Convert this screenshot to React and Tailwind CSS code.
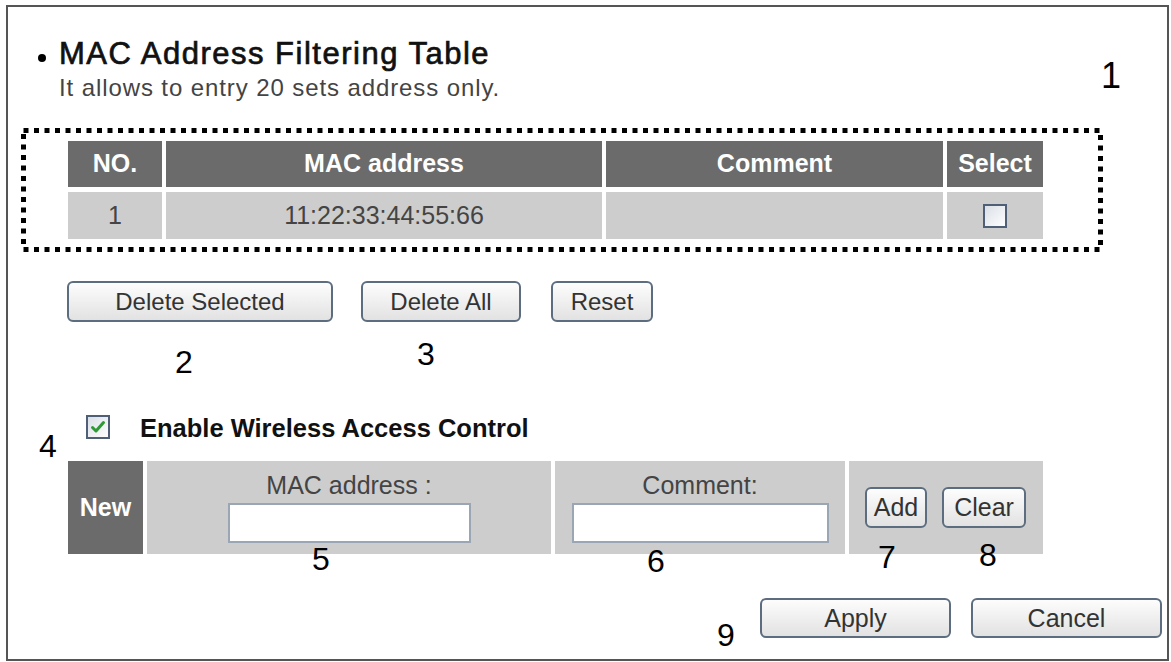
import React from "react";

const F = "font-['Liberation_Sans',Arial,Helvetica,sans-serif]";

function Btn({ children, className = "" }) {
  return (
    <button
      type="button"
      className={`flex items-center justify-center rounded-[6px] border-2 border-[#5d6d80] bg-linear-to-b from-[#fdfdfd] to-[#e2e2e2] text-[#333] leading-none ${className}`}
    >
      {children}
    </button>
  );
}

function Digit({ children, className = "" }) {
  return (
    <div className={`text-[32px] leading-[36px] text-black ${className}`}>{children}</div>
  );
}

function Check({ checked }) {
  return (
    <svg width="24" height="24" viewBox="0 0 24 24">
      <defs>
        <linearGradient id={checked ? "cg1" : "cg2"} x1="0" y1="0" x2="1" y2="1">
          <stop offset="0" stopColor="#d9dee6" />
          <stop offset="1" stopColor="#ffffff" />
        </linearGradient>
      </defs>
      <rect x="1" y="1" width="22" height="22" fill={`url(#${checked ? "cg1" : "cg2"})`} stroke="#4f5f78" strokeWidth="2" />
      {checked && (
        <path d="M6.5 12.5 L10 16 L17.5 7.5" fill="none" stroke="#2f9a35" strokeWidth="3" strokeLinecap="round" strokeLinejoin="round" />
      )}
    </svg>
  );
}

export default function App() {
  return (
    <div className={`${F} w-[1171px] h-[662px] bg-white overflow-hidden`}>
      <div className="relative ml-[6px] mt-[5px] w-[1163px] h-[656px] border-2 border-[#555]">
        {/* Header */}
        <div className="flex mt-[29px]">
          <div className="flex flex-col">
            <div className="flex items-center h-[36px]">
              <div className="ml-[30px] mt-[8px] w-[8px] h-[8px] rounded-full bg-black" />
              <div className="ml-[13px] text-[31px] leading-[36px] tracking-[1.5px] text-[#111] [-webkit-text-stroke:0.7px_#111]">
                MAC Address Filtering Table
              </div>
            </div>
            <div className="ml-[51px] mt-[2px] text-[24px] leading-[28px] tracking-[0.9px] text-[#444]">
              It allows to entry 20 sets address only.
            </div>
          </div>
          <div className="ml-auto mr-[46px] mt-[20px] text-[36px] leading-[40px] text-black">1</div>
        </div>

        {/* Dotted table box */}
        <div className="relative ml-[13px] mt-[26px] w-[1082px] h-[124px] pl-[47px] pt-[13px]">
          <svg className="absolute inset-0" width="1082" height="124" viewBox="0 0 1082 124">
            <rect x="2.5" y="2.5" width="1077" height="119" fill="none" stroke="#000" strokeWidth="5" strokeDasharray="5 5.5" />
          </svg>
          <div className="grid grid-cols-[94px_436px_337px_96px] gap-x-[4px] gap-y-[5px]">
            {["NO.", "MAC address", "Comment", "Select"].map((h) => (
              <div key={h} className="h-[46px] bg-[#6b6b6b] flex items-center justify-center text-white font-bold text-[25px]">
                {h}
              </div>
            ))}
            <div className="h-[47px] bg-[#cdcdcd] flex items-center justify-center text-[25px] text-[#444]">1</div>
            <div className="h-[47px] bg-[#cdcdcd] flex items-center justify-center text-[25px] text-[#444]">11:22:33:44:55:66</div>
            <div className="h-[47px] bg-[#cdcdcd]" />
            <div className="h-[47px] bg-[#cdcdcd] flex items-center justify-center">
              <Check />
            </div>
          </div>
        </div>

        {/* Delete buttons */}
        <div className="flex mt-[29px] h-[41px]">
          <Btn className="ml-[59px] w-[266px] h-[41px] text-[24px]">Delete Selected</Btn>
          <Btn className="ml-[28px] w-[160px] h-[41px] text-[24px]">Delete All</Btn>
          <Btn className="ml-[30px] w-[102px] h-[41px] text-[24px]">Reset</Btn>
        </div>
        <div className="flex items-start h-[56px]">
          <Digit className="ml-[167px] mt-[22px] w-[20px]">2</Digit>
          <Digit className="ml-[222px] mt-[14px] w-[20px]">3</Digit>
        </div>

        {/* Enable row */}
        <div className="flex items-start h-[83px]">
          <Digit className="ml-[31px] mt-[50px] w-[20px]">4</Digit>
          <div className="ml-[27px] mt-[37px] w-[24px] h-[24px]">
            <Check checked />
          </div>
          <div className="ml-[30px] mt-[35px] text-[25.5px] leading-[30px] font-bold text-[#111]">
            Enable Wireless Access Control
          </div>
        </div>

        {/* New table */}
        <div className="ml-[60px] grid grid-cols-[75px_404px_290px_194px] gap-x-[4px] h-[93px]">
          <div className="bg-[#6b6b6b] flex items-center justify-center text-white font-bold text-[25px]">New</div>
          <div className="relative bg-[#cdcdcd] flex flex-col items-center">
            <div className="mt-[10px] text-[25px] leading-[28px] text-[#444]">MAC address :</div>
            <div className="mt-[4px] w-[243px] h-[40px] bg-white border-2 border-[#9aa6b4]" />
            <Digit className="absolute left-[165px] top-[80px]">5</Digit>
          </div>
          <div className="relative bg-[#cdcdcd] flex flex-col items-center">
            <div className="mt-[10px] text-[25px] leading-[28px] text-[#444]">Comment:</div>
            <div className="mt-[4px] w-[257px] h-[40px] bg-white border-2 border-[#9aa6b4]" />
            <Digit className="absolute left-[92px] top-[82px]">6</Digit>
          </div>
          <div className="relative bg-[#cdcdcd] flex items-start">
            <Btn className="ml-[16px] mt-[26px] w-[62px] h-[41px] text-[25px]">Add</Btn>
            <Btn className="ml-[15px] mt-[26px] w-[84px] h-[41px] text-[25px]">Clear</Btn>
            <Digit className="absolute left-[29px] top-[78px]">7</Digit>
            <Digit className="absolute left-[130px] top-[76px]">8</Digit>
          </div>
        </div>

        {/* Apply / Cancel */}
        <div className="flex items-start mt-[44px] h-[40px]">
          <Digit className="ml-[709px] mt-[19px] w-[20px]">9</Digit>
          <Btn className="ml-[23px] w-[191px] h-[40px] text-[25px]">Apply</Btn>
          <Btn className="ml-[20px] w-[191px] h-[40px] text-[25px]">Cancel</Btn>
        </div>
      </div>
    </div>
  );
}
